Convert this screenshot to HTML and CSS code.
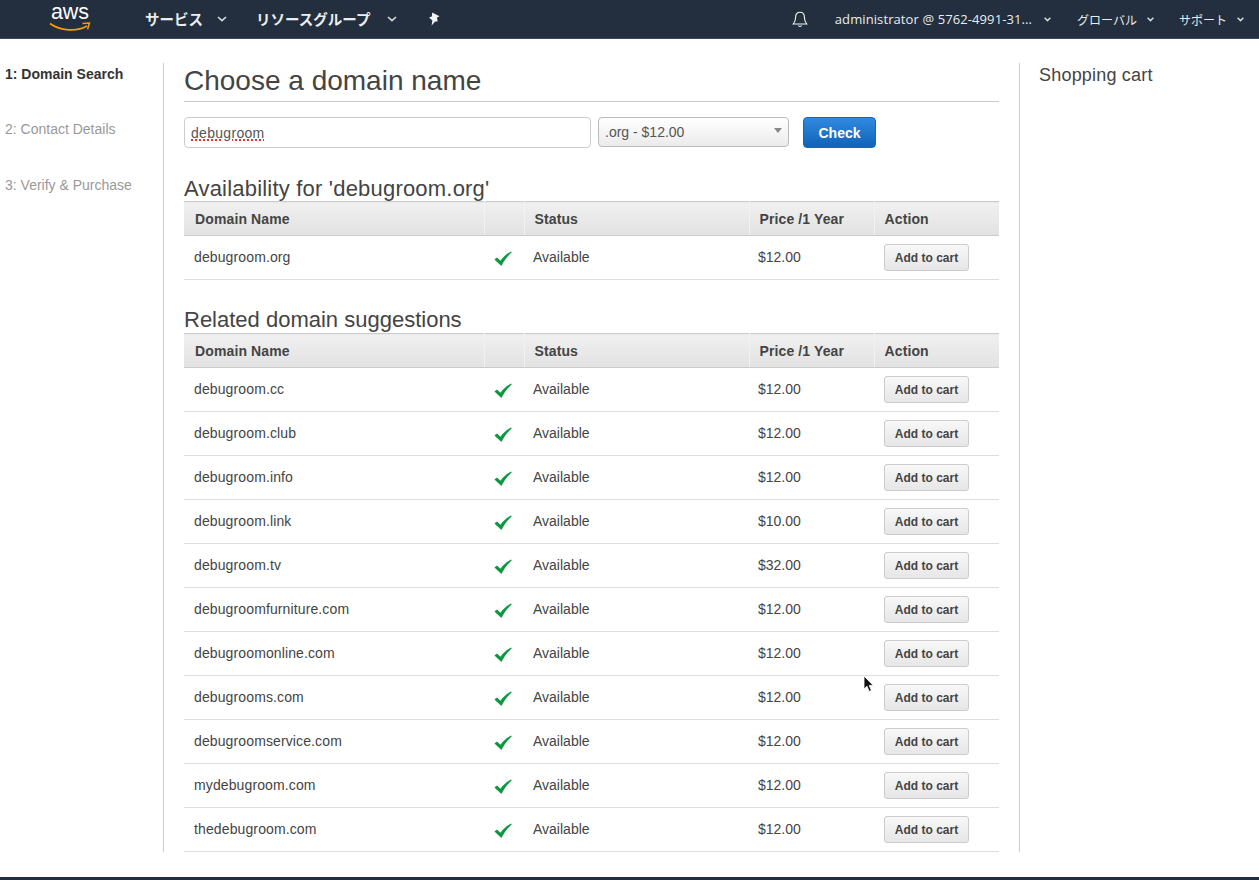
FILE: index.html
```html
<!DOCTYPE html>
<html lang="ja">
<head>
  <meta charset="UTF-8">
  <title>Choose a domain name</title>
  <link rel="stylesheet" href="styles.css">
</head>
<body>
  <nav class="topnav">
    <a class="logo">
      <span class="logo-text">aws</span>
      <svg class="logo-smile" width="42" height="10" viewBox="0 0 42 10">
        <path d="M1 1.5C11 9 28 10 38 4" fill="none" stroke="#f90" stroke-width="1.7"/>
        <path d="M33.5 1.6L40.4 1L38.6 7.4" fill="none" stroke="#f90" stroke-width="1.5"/>
      </svg>
    </a>
    <a class="nav-main nav-services">サービス<svg class="caret-big" width="10" height="6" viewBox="0 0 10 6"><path d="M1 1l4 3.6L9 1" fill="none" stroke="#d5dbdb" stroke-width="1.6"/></svg></a>
    <a class="nav-main nav-groups">リソースグループ<svg class="caret-big" width="10" height="6" viewBox="0 0 10 6"><path d="M1 1l4 3.6L9 1" fill="none" stroke="#d5dbdb" stroke-width="1.6"/></svg></a>
    <svg class="pin" width="12" height="14" viewBox="0 0 12 14"><path d="M4.2 0.5L11.5 4.2L9 5.6L9.6 9.4L7.2 9.6L3.6 13.6L4.4 8.4L1 5.6L3.8 4.4Z" fill="#f2f3f3"/></svg>
    <div class="nav-right">
      <svg class="bell" width="16" height="17" viewBox="0 0 16 17"><path d="M8 1.2C5 1.2 3.6 3.4 3.6 6.2C3.6 9.6 2.8 11.2 1.2 13H14.8C13.2 11.2 12.4 9.6 12.4 6.2C12.4 3.4 11 1.2 8 1.2ZM6.4 14.4C6.8 15.8 9.2 15.8 9.6 14.4" fill="none" stroke="#f2f3f3" stroke-width="1.1"/></svg>
      <a class="nav-small nav-account">administrator @ 5762-4991-31...<svg class="caret" width="7" height="5" viewBox="0 0 7 5"><path d="M0.6 0.8L3.5 3.6L6.4 0.8" fill="none" stroke="#d5dbdb" stroke-width="1.5"/></svg></a>
      <a class="nav-small nav-region">グローバル<svg class="caret" width="7" height="5" viewBox="0 0 7 5"><path d="M0.6 0.8L3.5 3.6L6.4 0.8" fill="none" stroke="#d5dbdb" stroke-width="1.5"/></svg></a>
      <a class="nav-small nav-support">サポート<svg class="caret" width="7" height="5" viewBox="0 0 7 5"><path d="M0.6 0.8L3.5 3.6L6.4 0.8" fill="none" stroke="#d5dbdb" stroke-width="1.5"/></svg></a>
    </div>
  </nav>

  <div class="layout">
    <aside class="steps">
      <div class="step active">1: Domain Search</div>
      <div class="step">2: Contact Details</div>
      <div class="step">3: Verify &amp; Purchase</div>
    </aside>

    <main class="content">
      <h1>Choose a domain name</h1>
      <form class="search">
        <div class="search-input"><span class="misspelled">debugroom</span></div>
        <div class="tld-select">.org - $12.00<span class="select-arrow"></span></div>
        <button type="button" class="btn-check">Check</button>
      </form>

      <h2 class="first">Availability for 'debugroom.org'</h2>
      <table>
        <thead>
          <tr><th class="c-name">Domain Name</th><th class="c-icon"></th><th class="c-status">Status</th><th class="c-price">Price /1 Year</th><th class="c-action">Action</th></tr>
        </thead>
        <tbody>
          <tr><td>debugroom.org</td><td class="tick"><svg width="18" height="15" viewBox="0 0 18 15"><path d="M0.4 8.4L3 6.4L6.4 9.8C9 6 13 2.6 17 0.4L17.8 1.2C13.4 5.2 9.8 10 7.4 15Z" fill="#0a9a3c"/></svg></td><td>Available</td><td>$12.00</td><td><button type="button" class="btn-add">Add to cart</button></td></tr>
        </tbody>
      </table>

      <h2 class="second">Related domain suggestions</h2>
      <table>
        <thead>
          <tr><th class="c-name">Domain Name</th><th class="c-icon"></th><th class="c-status">Status</th><th class="c-price">Price /1 Year</th><th class="c-action">Action</th></tr>
        </thead>
        <tbody>
          <tr><td>debugroom.cc</td><td class="tick"><svg width="18" height="15" viewBox="0 0 18 15"><path d="M0.4 8.4L3 6.4L6.4 9.8C9 6 13 2.6 17 0.4L17.8 1.2C13.4 5.2 9.8 10 7.4 15Z" fill="#0a9a3c"/></svg></td><td>Available</td><td>$12.00</td><td><button type="button" class="btn-add">Add to cart</button></td></tr>
          <tr><td>debugroom.club</td><td class="tick"><svg width="18" height="15" viewBox="0 0 18 15"><path d="M0.4 8.4L3 6.4L6.4 9.8C9 6 13 2.6 17 0.4L17.8 1.2C13.4 5.2 9.8 10 7.4 15Z" fill="#0a9a3c"/></svg></td><td>Available</td><td>$12.00</td><td><button type="button" class="btn-add">Add to cart</button></td></tr>
          <tr><td>debugroom.info</td><td class="tick"><svg width="18" height="15" viewBox="0 0 18 15"><path d="M0.4 8.4L3 6.4L6.4 9.8C9 6 13 2.6 17 0.4L17.8 1.2C13.4 5.2 9.8 10 7.4 15Z" fill="#0a9a3c"/></svg></td><td>Available</td><td>$12.00</td><td><button type="button" class="btn-add">Add to cart</button></td></tr>
          <tr><td>debugroom.link</td><td class="tick"><svg width="18" height="15" viewBox="0 0 18 15"><path d="M0.4 8.4L3 6.4L6.4 9.8C9 6 13 2.6 17 0.4L17.8 1.2C13.4 5.2 9.8 10 7.4 15Z" fill="#0a9a3c"/></svg></td><td>Available</td><td>$10.00</td><td><button type="button" class="btn-add">Add to cart</button></td></tr>
          <tr><td>debugroom.tv</td><td class="tick"><svg width="18" height="15" viewBox="0 0 18 15"><path d="M0.4 8.4L3 6.4L6.4 9.8C9 6 13 2.6 17 0.4L17.8 1.2C13.4 5.2 9.8 10 7.4 15Z" fill="#0a9a3c"/></svg></td><td>Available</td><td>$32.00</td><td><button type="button" class="btn-add">Add to cart</button></td></tr>
          <tr><td>debugroomfurniture.com</td><td class="tick"><svg width="18" height="15" viewBox="0 0 18 15"><path d="M0.4 8.4L3 6.4L6.4 9.8C9 6 13 2.6 17 0.4L17.8 1.2C13.4 5.2 9.8 10 7.4 15Z" fill="#0a9a3c"/></svg></td><td>Available</td><td>$12.00</td><td><button type="button" class="btn-add">Add to cart</button></td></tr>
          <tr><td>debugroomonline.com</td><td class="tick"><svg width="18" height="15" viewBox="0 0 18 15"><path d="M0.4 8.4L3 6.4L6.4 9.8C9 6 13 2.6 17 0.4L17.8 1.2C13.4 5.2 9.8 10 7.4 15Z" fill="#0a9a3c"/></svg></td><td>Available</td><td>$12.00</td><td><button type="button" class="btn-add">Add to cart</button></td></tr>
          <tr><td>debugrooms.com</td><td class="tick"><svg width="18" height="15" viewBox="0 0 18 15"><path d="M0.4 8.4L3 6.4L6.4 9.8C9 6 13 2.6 17 0.4L17.8 1.2C13.4 5.2 9.8 10 7.4 15Z" fill="#0a9a3c"/></svg></td><td>Available</td><td>$12.00</td><td><button type="button" class="btn-add">Add to cart</button></td></tr>
          <tr><td>debugroomservice.com</td><td class="tick"><svg width="18" height="15" viewBox="0 0 18 15"><path d="M0.4 8.4L3 6.4L6.4 9.8C9 6 13 2.6 17 0.4L17.8 1.2C13.4 5.2 9.8 10 7.4 15Z" fill="#0a9a3c"/></svg></td><td>Available</td><td>$12.00</td><td><button type="button" class="btn-add">Add to cart</button></td></tr>
          <tr><td>mydebugroom.com</td><td class="tick"><svg width="18" height="15" viewBox="0 0 18 15"><path d="M0.4 8.4L3 6.4L6.4 9.8C9 6 13 2.6 17 0.4L17.8 1.2C13.4 5.2 9.8 10 7.4 15Z" fill="#0a9a3c"/></svg></td><td>Available</td><td>$12.00</td><td><button type="button" class="btn-add">Add to cart</button></td></tr>
          <tr><td>thedebugroom.com</td><td class="tick"><svg width="18" height="15" viewBox="0 0 18 15"><path d="M0.4 8.4L3 6.4L6.4 9.8C9 6 13 2.6 17 0.4L17.8 1.2C13.4 5.2 9.8 10 7.4 15Z" fill="#0a9a3c"/></svg></td><td>Available</td><td>$12.00</td><td><button type="button" class="btn-add">Add to cart</button></td></tr>
        </tbody>
      </table>
    </main>

    <aside class="cart">Shopping cart</aside>
  </div>

  <svg class="cursor" width="12" height="18" viewBox="0 0 12 18"><path d="M1 1V14L4 11.2L6.2 16.4L8.4 15.4L6.2 10.4H10.2Z" fill="#111" stroke="#fff" stroke-width="0.8"/></svg>

  <div class="footer-bar"></div>
</body>
</html>
```

FILE: styles.css
```css
html, body {
  margin: 0;
  padding: 0;
}
body {
  position: relative;
  height: 880px;
  overflow: hidden;
  font-family: "Liberation Sans", "Noto Sans CJK JP", sans-serif;
  font-size: 14px;
  color: #444444;
  background-color: #ffffff;
}

/* top bar */
.topnav {
  display: flex;
  align-items: center;
  height: 39px;
  box-sizing: border-box;
  border-bottom: 1px solid #3c4a5b;
  background-color: #232f3e;
  color: #f2f3f3;
}
.logo {
  display: flex;
  flex-direction: column;
  width: 42px;
  height: 38px;
  margin-left: 49px;
}
.logo-text {
  font-size: 21.5px;
  line-height: 24px;
  color: #ffffff;
  text-align: center;
}
.logo-smile {
  margin-top: -2px;
}
.nav-main {
  display: flex;
  align-items: center;
  padding-bottom: 2px;
  font-size: 14.5px;
  font-weight: 700;
  color: #eaeded;
}
.nav-services {
  margin-left: 54px;
}
.nav-groups {
  margin-left: 29px;
}
.caret-big {
  margin-left: 14px;
  margin-top: 2px;
}
.nav-groups .caret-big {
  margin-left: 17px;
}
.pin {
  margin-left: 31px;
}
.nav-right {
  display: flex;
  align-items: center;
  margin-left: auto;
  padding-right: 15px;
}
.bell {
  margin-right: 27px;
}
.nav-small {
  display: flex;
  align-items: center;
  font-size: 12px;
  color: #eaeded;
}
.nav-account {
  font-family: "Open Sans", sans-serif;
  font-size: 13px;
  letter-spacing: 0.1px;
}
.nav-region {
  margin-left: 26px;
}
.nav-support {
  margin-left: 25px;
}
.caret {
  margin-left: 10px;
  margin-top: 1px;
}
.nav-account .caret {
  margin-left: 12px;
}

/* three columns */
.layout {
  display: flex;
  align-items: stretch;
  height: 789px;
  margin-top: 24px;
}
.steps {
  flex: none;
  width: 164px;
  box-sizing: border-box;
  padding-left: 5px;
  border-right: 1px solid #cccccc;
}
.step {
  height: 56px;
  line-height: 22px;
  color: #999999;
}
.step.active {
  height: 55px;
  font-weight: 700;
  color: #333333;
}
.content {
  flex: none;
  width: 815px;
  margin-left: 20px;
}
.cart {
  flex: 1;
  margin-left: 20px;
  padding-left: 19px;
  border-left: 1px solid #cccccc;
  font-size: 18px;
  line-height: 24px;
  letter-spacing: 0.2px;
}

h1 {
  margin: 0;
  height: 38px;
  border-bottom: 1px solid #cccccc;
  font-size: 28px;
  font-weight: 400;
  line-height: 35px;
  color: #444444;
}
h2 {
  margin: 0;
  font-size: 22px;
  font-weight: 400;
  line-height: 25px;
  color: #444444;
}
h2.first {
  margin-top: 28px;
  letter-spacing: 0.2px;
}
h2.second {
  margin-top: 27px;
  margin-bottom: 1px;
}

/* search row */
.search {
  display: flex;
  align-items: flex-start;
  margin-top: 15px;
}
.search-input {
  width: 407px;
  height: 31px;
  box-sizing: border-box;
  padding-left: 6px;
  border: 1px solid #cccccc;
  border-radius: 4px;
  line-height: 30px;
  letter-spacing: 0.3px;
  color: #555555;
}
.misspelled {
  text-decoration: underline dotted #e0392b 2px;
  text-underline-offset: 1px;
}
.tld-select {
  position: relative;
  width: 191px;
  height: 30px;
  box-sizing: border-box;
  margin-left: 7px;
  padding-left: 6px;
  border: 1px solid #bbbbbb;
  border-radius: 4px;
  background: linear-gradient(#ffffff, #ebebeb);
  line-height: 28px;
  color: #555555;
}
.select-arrow {
  position: absolute;
  top: 10px;
  right: 6px;
  width: 0;
  height: 0;
  border-left: 4px solid transparent;
  border-right: 4px solid transparent;
  border-top: 5px solid #888888;
}
.btn-check {
  width: 73px;
  height: 31px;
  margin-left: 14px;
  padding: 0;
  border: 1px solid #1a66b3;
  border-radius: 4px;
  background: linear-gradient(#308ae0, #0f63b8);
  color: #ffffff;
  font-family: inherit;
  font-size: 14px;
  font-weight: 700;
}

/* tables */
table {
  width: 815px;
  table-layout: fixed;
  border-collapse: collapse;
}
th {
  height: 34px;
  box-sizing: border-box;
  padding: 0 0 0 10px;
  border-top: 1px solid #cccccc;
  border-bottom: 1px solid #cccccc;
  border-right: 1px solid #f2f2f2;
  background: linear-gradient(#f0f0f0, #e2e2e2);
  text-align: left;
  font-size: 14px;
  font-weight: 700;
  letter-spacing: 0.12px;
  color: #444444;
}
th:last-child {
  border-right: none;
}
.c-name { width: 300px; padding-left: 11px; }
.c-icon { width: 40px; }
.c-status { width: 225px; }
.c-price { width: 125px; }
.c-action { width: 125px; }
td {
  height: 44px;
  box-sizing: border-box;
  padding: 0 0 2px 9px;
  border-bottom: 1px solid #dddddd;
  color: #444444;
}
td:first-child {
  padding-left: 10px;
  letter-spacing: 0.12px;
}
td:last-child {
  padding-bottom: 0;
}
td.tick {
  padding-left: 10px;
  padding-bottom: 0;
}
td.tick svg {
  display: block;
  margin-top: 1px;
}
.btn-add {
  display: block;
  width: 85px;
  height: 27px;
  margin-left: 1px;
  padding: 0;
  border: 1px solid #cccccc;
  border-radius: 3px;
  background: linear-gradient(#f8f8f8, #e6e6e6);
  color: #444444;
  font-family: inherit;
  font-size: 12px;
  font-weight: 700;
}

/* mouse pointer in the shot */
.cursor {
  position: absolute;
  left: 863px;
  top: 675px;
}
.footer-bar {
  position: absolute;
  left: 0;
  right: 0;
  bottom: 0;
  height: 3px;
  background-color: #232f3e;
}
```
